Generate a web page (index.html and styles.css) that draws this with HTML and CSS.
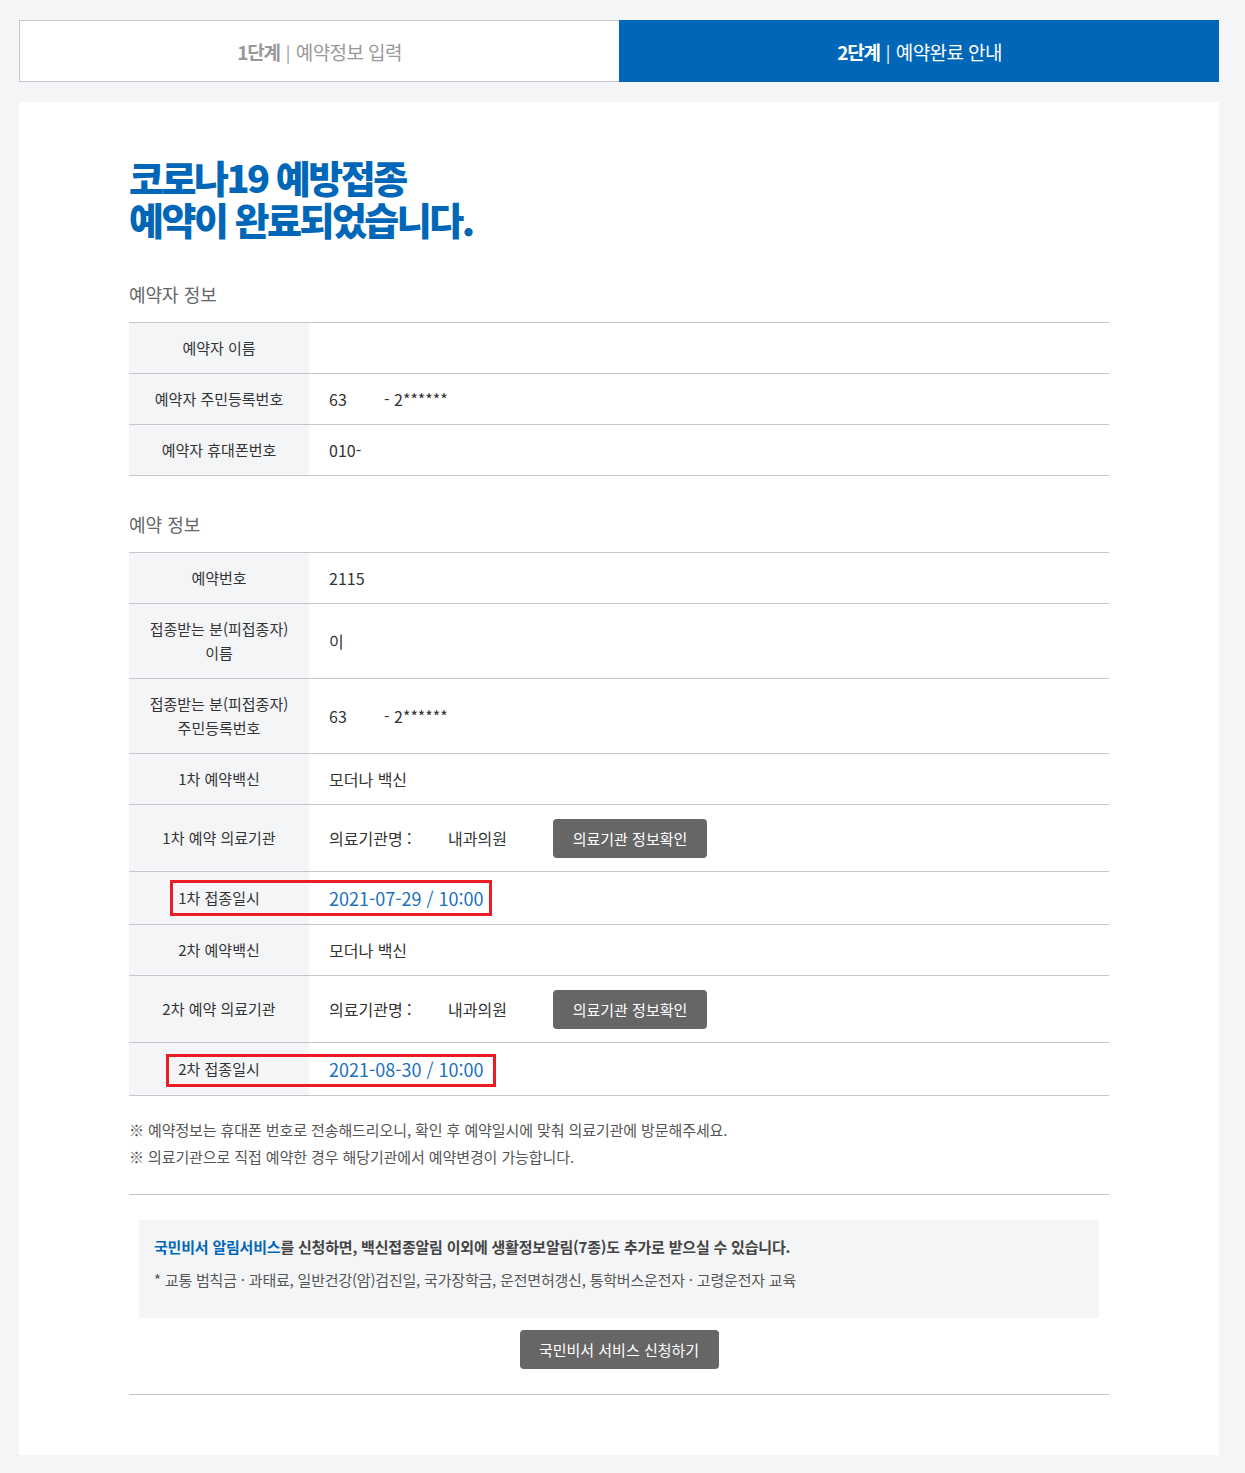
FILE: index.html
```html
<!DOCTYPE html>
<html lang="ko">

<head>
    <meta charset="utf-8">
    <title>코로나19 예방접종 예약 완료</title>
    <link rel="stylesheet" href="styles.css">
</head>

<body>
    <div class="wrap">
        <ul class="steps">
            <li class="step"><b>1단계</b><span class="bar">|</span>예약정보 입력</li>
            <li class="step on"><b>2단계</b><span class="bar">|</span>예약완료 안내</li>
        </ul>

        <div class="card">
            <h1 class="title">코로나19 예방접종<br>예약이 완료되었습니다.</h1>

            <h2 class="sub">예약자 정보</h2>
            <div class="info">
                <div class="row">
                    <div class="th">예약자 이름</div>
                    <div class="td"></div>
                </div>
                <div class="row">
                    <div class="th">예약자 주민등록번호</div>
                    <div class="td"><span class="jumin">63</span>- 2******</div>
                </div>
                <div class="row">
                    <div class="th">예약자 휴대폰번호</div>
                    <div class="td">010-</div>
                </div>
            </div>

            <h2 class="sub sub-next">예약 정보</h2>
            <div class="info">
                <div class="row">
                    <div class="th">예약번호</div>
                    <div class="td">2115</div>
                </div>
                <div class="row tall">
                    <div class="th">접종받는 분(피접종자)<br>이름</div>
                    <div class="td">이</div>
                </div>
                <div class="row tall">
                    <div class="th">접종받는 분(피접종자)<br>주민등록번호</div>
                    <div class="td"><span class="jumin">63</span>- 2******</div>
                </div>
                <div class="row">
                    <div class="th">1차 예약백신</div>
                    <div class="td">모더나 백신</div>
                </div>
                <div class="row btn-row">
                    <div class="th">1차 예약 의료기관</div>
                    <div class="td">
                        <span class="org-label">의료기관명 :</span>
                        <span class="org-name">내과의원</span>
                        <button class="btn" type="button">의료기관 정보확인</button>
                    </div>
                </div>
                <div class="row date-row">
                    <div class="th">1차 접종일시</div>
                    <div class="td date">2021-07-29 / 10:00</div>
                    <span class="mark mark1"></span>
                </div>
                <div class="row">
                    <div class="th">2차 예약백신</div>
                    <div class="td">모더나 백신</div>
                </div>
                <div class="row btn-row">
                    <div class="th">2차 예약 의료기관</div>
                    <div class="td">
                        <span class="org-label">의료기관명 :</span>
                        <span class="org-name">내과의원</span>
                        <button class="btn" type="button">의료기관 정보확인</button>
                    </div>
                </div>
                <div class="row date-row">
                    <div class="th">2차 접종일시</div>
                    <div class="td date">2021-08-30 / 10:00</div>
                    <span class="mark mark2"></span>
                </div>
            </div>

            <ul class="notes">
                <li>※ 예약정보는 휴대폰 번호로 전송해드리오니, 확인 후 예약일시에 맞춰 의료기관에 방문해주세요.</li>
                <li>※ 의료기관으로 직접 예약한 경우 해당기관에서 예약변경이 가능합니다.</li>
            </ul>

            <div class="service">
                <div class="service-box">
                    <p class="service-main"><span class="blue">국민비서 알림서비스</span>를 신청하면, 백신접종알림 이외에 생활정보알림(7종)도 추가로 받으실 수 있습니다.</p>
                    <p class="service-sub">* 교통 범칙금 · 과태료, 일반건강(암)검진일, 국가장학금, 운전면허갱신, 통학버스운전자 · 고령운전자 교육</p>
                </div>
                <div class="service-btn">
                    <button class="btn btn-lg" type="button">국민비서 서비스 신청하기</button>
                </div>
            </div>
        </div>
    </div>
</body>

</html>
```

FILE: styles.css
```css
* {
    box-sizing: border-box;
}

body {
    margin: 0;
    background: #f4f5f7;
    font-family: "Noto Sans CJK KR", "Noto Sans", sans-serif;
    color: #333;
}

.wrap {
    width: 1200px;
    margin: 0 0 0 19px;
    padding: 20px 0 18px;
}

/* steps */
.steps {
    display: flex;
    margin: 0;
    padding: 0;
    list-style: none;
}

.steps .step {
    flex: 1;
    height: 62px;
    display: flex;
    align-items: center;
    justify-content: center;
    font-size: 19px;
    letter-spacing: -0.6px;
    color: #999;
    background: #fff;
    border: 1px solid #c6c6cc;
    border-right: 0;
}

.steps .step b {
    font-weight: 700;
    letter-spacing: -1.2px;
}

.steps .step .bar {
    margin: 0 6px;
    font-size: 17px;
}

.steps .step.on {
    color: #fff;
    background: #0067b8;
    border-color: #0067b8;
}

/* card */
.card {
    margin-top: 20px;
    background: #fff;
    padding: 54px 110px 60px;
}

.title {
    margin: 0;
    font-size: 38px;
    line-height: 42px;
    font-weight: 900;
    letter-spacing: -2.5px;
    color: #0067b8;
}

.sub {
    margin: 41px 0 15px;
    font-size: 18px;
    font-weight: 400;
    color: #666;
    line-height: 26px;
}

.sub.sub-next {
    margin-top: 35px;
}

.info {
    border-top: 1px solid #c6c6cc;
}

.info .row {
    position: relative;
    display: grid;
    grid-template-columns: 180px 1fr;
    min-height: 51px;
    border-bottom: 1px solid #c6c6cc;
}

.info .row.tall {
    min-height: 75px;
}

.info .row.btn-row {
    min-height: 67px;
}

.info .row.date-row {
    min-height: 53px;
}

.info .th {
    display: flex;
    align-items: center;
    justify-content: center;
    text-align: center;
    font-size: 15px;
    line-height: 24px;
    background: #f4f5f7;
    color: #333;
}

.info .td {
    display: flex;
    align-items: center;
    padding-left: 20px;
    font-size: 16px;
    color: #333;
}

.info .jumin {
    width: 55px;
}

.info .org-label {
    width: 119px;
}

.info .org-name {
    width: 105px;
}

.info .td.date {
    font-size: 18px;
    color: #1d6fc0;
}

.mark {
    position: absolute;
    border: 3px solid #ea1c24;
}

.mark1 {
    left: 41px;
    top: 8px;
    width: 322px;
    height: 36px;
}

.mark2 {
    left: 37px;
    top: 11px;
    width: 330px;
    height: 33px;
}

.btn {
    height: 39px;
    padding: 0;
    width: 154px;
    border: 0;
    border-radius: 4px;
    background: #666;
    color: #fff;
    font-family: inherit;
    font-size: 15px;
}

.btn-lg {
    width: 199px;
}

.notes {
    margin: 20px 0 0;
    padding: 0 0 24px;
    list-style: none;
    font-size: 15px;
    line-height: 27px;
    color: #555;
    letter-spacing: -0.1px;
    border-bottom: 1px solid #c6c6cc;
}

.service {
    padding: 25px 10px 25px;
    border-bottom: 1px solid #c6c6cc;
}

.service-box {
    background: #f4f5f7;
    padding: 15px 15px 26px;
}

.service-main {
    margin: 0;
    font-size: 15px;
    font-weight: 700;
    line-height: 24px;
    color: #444;
    letter-spacing: -0.2px;
}

.service-main .blue {
    color: #0067b8;
}

.service-sub {
    margin: 9px 0 0;
    font-size: 15px;
    line-height: 24px;
    color: #555;
    letter-spacing: -0.2px;
}

.service-btn {
    margin-top: 12px;
    text-align: center;
}
```
